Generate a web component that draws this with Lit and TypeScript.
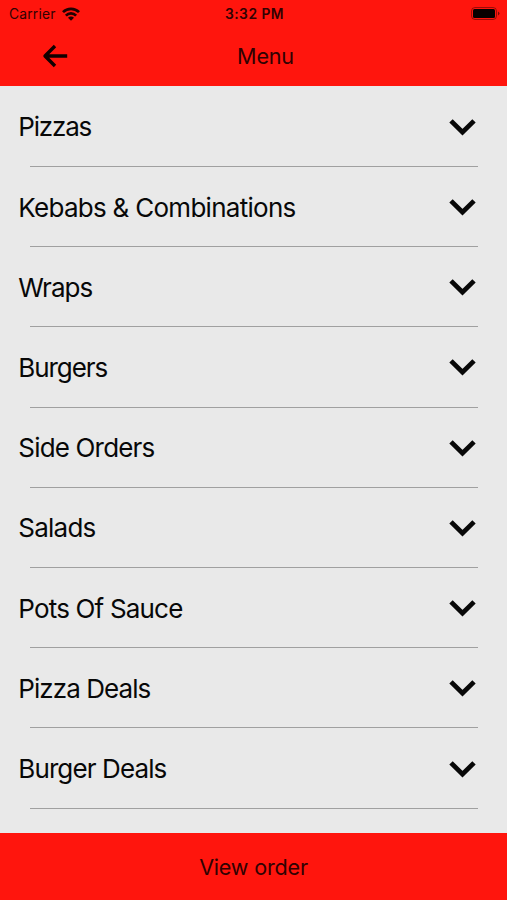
import { LitElement, html, css } from "lit";

const items = ["Pizzas", "Kebabs & Combinations", "Wraps", "Burgers", "Side Orders", "Salads", "Pots Of Sauce", "Pizza Deals", "Burger Deals"];
const widths = [74, 278, 75, 90, 137, 78, 165, 133, 149];

class AppRoot extends LitElement {
  static styles = css`
    :host { display: flex; flex-direction: column; width: 507px; height: 900px; overflow: hidden; background: #e9e9e9; color: #080808; font-family: Inter, "Liberation Sans", sans-serif; }
    .top { height: 86px; flex: none; background: #ff150d; display: flex; flex-direction: column; color: #300202; }
    .status { height: 27px; display: grid; grid-template-columns: 1fr auto 1fr; align-items: center; padding: 0 7px 0 9px; font-size: 13.8px; }
    .carrier { display: flex; align-items: center; gap: 6px; letter-spacing: 0.2px; }
    .time { font-weight: 600; letter-spacing: 0.5px; }
    .battery { justify-self: end; }
    .nav { height: 57px; display: grid; grid-template-columns: 1fr auto 1fr; align-items: center; padding: 0 18px 0 42px; }
    .title { font-size: 21.6px; letter-spacing: -0.2px; }
    svg { display: block; }
    .list { flex: 1; min-height: 0; padding-top: 0.7px; }
    .row { height: 80.22px; box-sizing: border-box; display: flex; flex-direction: column; }
    .line { flex: 1; display: flex; align-items: center; justify-content: space-between; padding: 2px 31px 0 18px; }
    .rule { height: 1px; margin: 0 29px 0 30px; background: #a0a0a0; }
    .foot { height: 67px; flex: none; background: #ff150d; color: #300202; display: flex; align-items: center; justify-content: center; font-size: 21.6px; letter-spacing: -0.2px; }
  `;
  render() {
    return html`
      <header class="top">
        <div class="status">
          <div class="carrier"><span>Carrier</span>
            <svg width="18" height="14" viewBox="0 0 18 14" fill="none" stroke="#200202" stroke-width="2.7"><path d="M1 5.1a11.3 11.3 0 0 1 16 0M3.9 8.6a7.1 7.1 0 0 1 10.2 0"/><path d="M9 13.8L6 10.8a4.2 4.2 0 0 1 6 0Z" fill="#200202" stroke="none"/></svg>
          </div>
          <span class="time">3:32 PM</span>
          <svg class="battery" width="29" height="14" viewBox="0 0 29 14"><rect x=".5" y=".5" width="25" height="12" rx="3.5" fill="none" stroke="#200202" stroke-opacity=".45"/><rect x="2" y="2" width="22" height="9" rx="1.5" fill="#080000"/><path d="M27 4.5q1.5.8 1.5 2t-1.5 2z" fill="#200202" fill-opacity=".6"/></svg>
        </div>
        <div class="nav">
          <svg width="26" height="24" viewBox="0 0 26 24" fill="none" stroke="#100000" stroke-width="3.4" stroke-linejoin="round"><path d="M25.2 12H3M13 2L3 12L13 22"/></svg>
          <span class="title">Menu</span>
        </div>
      </header>
      <main class="list">
        ${items.map((t, i) => html`<div class="row"><div class="line">
          <svg width=${widths[i]} height="36"><text x="0.3" y="27" font-size="26" fill="#080808" textLength=${widths[i]}>${t}</text></svg>
          <svg width="27" height="17" viewBox="0 0 27 17" fill="none" stroke="#080808" stroke-width="4.8"><path d="M2 1.9L13.5 13.2L25 1.9"/></svg>
        </div><div class="rule"></div></div>`)}
      </main>
      <footer class="foot"><span>View order</span></footer>`;
  }
}
customElements.define("app-root", AppRoot);
